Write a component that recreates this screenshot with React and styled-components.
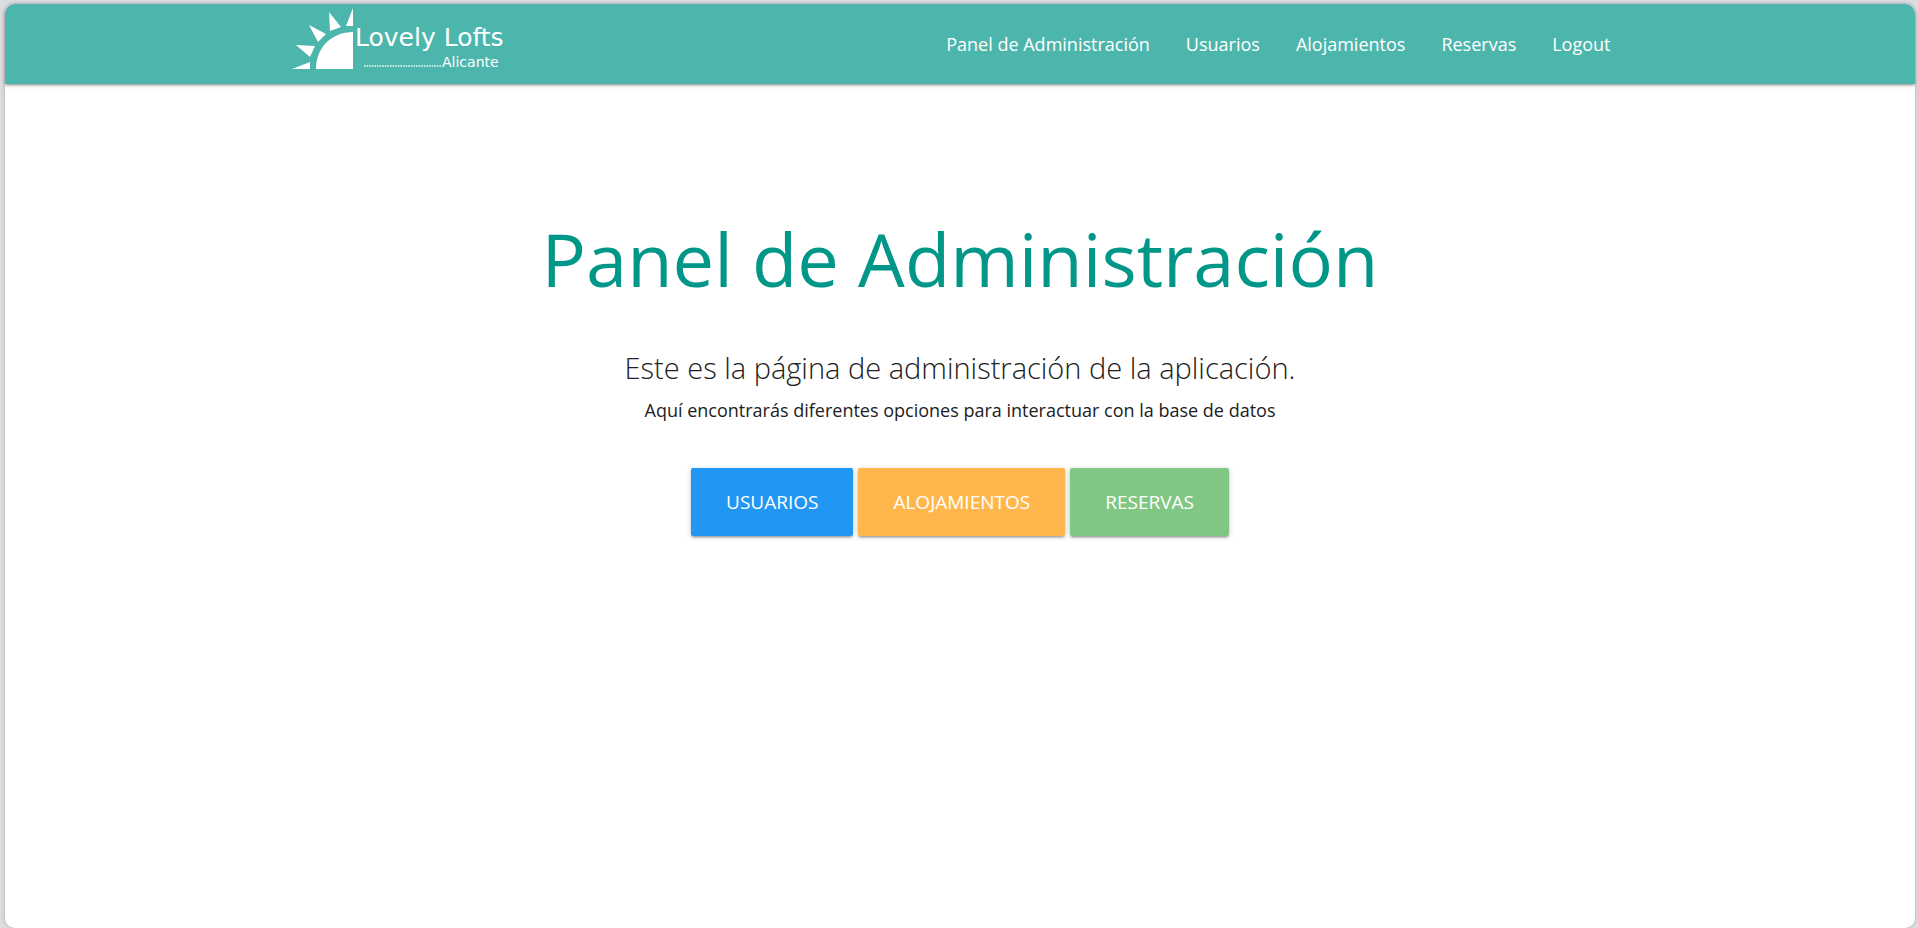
import React from "react";
import styled, { createGlobalStyle } from "styled-components";

const GlobalStyle = createGlobalStyle`
  *, *::before, *::after { box-sizing: border-box; }
  body {
    margin: 0;
    background: #dcdde1;
    color: #212121;
    font-family: "Open Sans", "Noto Sans", sans-serif;
    font-size: 18px;
  }
`;

const Shell = styled.div`
  display: flex;
  min-height: 100vh;
  padding: 4px 3px 0 5px;
`;

const Page = styled.div`
  flex: 1;
  min-width: 0;
  border-radius: 10px;
  background: #fff;
  box-shadow: 0 0 4px rgba(0, 0, 0, 0.2);
`;

const Navbar = styled.header`
  border-radius: 10px 10px 0 0;
  background: #4db6ac;
  box-shadow: 0 2px 2px 0 rgba(0, 0, 0, 0.14), 0 3px 1px -2px rgba(0, 0, 0, 0.12),
    0 1px 5px 0 rgba(0, 0, 0, 0.2);
`;

const Container = styled.div`
  display: flex;
  justify-content: space-between;
  width: 70%;
  min-height: 80px;
  margin: 0 auto;
`;

const Brand = styled.a`
  display: block;
  flex: none;
  height: 68px;
`;

const Menu = styled.nav`
  display: flex;
  align-items: center;
`;

const MenuLink = styled.a`
  padding: 0 18px;
  color: #fff;
  font-size: 18px;
  line-height: 80px;
  text-decoration: none;
  white-space: nowrap;
`;

const Main = styled.main`
  display: flex;
  flex-direction: column;
  align-items: center;
  padding: 126px 20px 40px;
  text-align: center;
`;

const Title = styled.h1`
  margin: 0;
  color: #009688;
  font-size: 74px;
  font-weight: 400;
  line-height: 98px;
`;

const Lead = styled.p`
  margin: 36px 0 0;
  font-size: 29px;
  font-weight: 300;
  line-height: 48px;
`;

const Description = styled.p`
  margin: 4px 0 0;
  font-size: 18px;
  line-height: 28px;
`;

const Actions = styled.div`
  display: flex;
  flex-wrap: wrap;
  justify-content: center;
  gap: 5px;
  margin-top: 44px;
`;

const ActionButton = styled.button`
  height: 68px;
  padding: 0 35px;
  border: 0;
  border-radius: 2px;
  background: ${(p) => p.$color};
  box-shadow: 0 2px 2px 0 rgba(0, 0, 0, 0.14), 0 3px 1px -2px rgba(0, 0, 0, 0.12),
    0 1px 5px 0 rgba(0, 0, 0, 0.2);
  color: #fff;
  font-family: inherit;
  font-size: 19px;
  text-transform: uppercase;
  cursor: pointer;
`;

function Logo() {
  return (
    <svg width="216" height="68" viewBox="0 0 216 68" role="img" aria-label="Lovely Lofts Alicante" fill="#fff">
      <path d="M24 65C24 43 40 28 61 28V65Z" />
      <path d="M0 65L18 58V65Z" />
      <path d="M4 41L23 42L18 53Z" />
      <path d="M17 21L34 30L26 38Z" />
      <path d="M37 8L49 23L38 27Z" />
      <path d="M61 4V22H54Z" />
      <path d="M72 62H150" stroke="#fff" strokeWidth="2" strokeDasharray="1.6 1" opacity="0.7" />
      <text x="63" y="42" fontFamily="DejaVu Sans, sans-serif" fontSize="25">Lovely Lofts</text>
      <text x="150" y="63" fontFamily="DejaVu Sans, sans-serif" fontSize="14">Alicante</text>
    </svg>
  );
}

const links = ["Panel de Administración", "Usuarios", "Alojamientos", "Reservas", "Logout"];

const actions = [
  { label: "Usuarios", color: "#2196f3" },
  { label: "Alojamientos", color: "#ffb74d" },
  { label: "Reservas", color: "#81c784" },
];

export default function App() {
  return (
    <Shell>
      <GlobalStyle />
      <Page>
        <Navbar>
          <Container>
            <Brand href="#">
              <Logo />
            </Brand>
            <Menu>
              {links.map((label) => (
                <MenuLink key={label} href="#">
                  {label}
                </MenuLink>
              ))}
            </Menu>
          </Container>
        </Navbar>
        <Main>
          <Title>Panel de Administración</Title>
          <Lead>Este es la página de administración de la aplicación.</Lead>
          <Description>
            Aquí encontrarás diferentes opciones para interactuar con la base de datos
          </Description>
          <Actions>
            {actions.map(({ label, color }) => (
              <ActionButton key={label} type="button" $color={color}>
                {label}
              </ActionButton>
            ))}
          </Actions>
        </Main>
      </Page>
    </Shell>
  );
}
